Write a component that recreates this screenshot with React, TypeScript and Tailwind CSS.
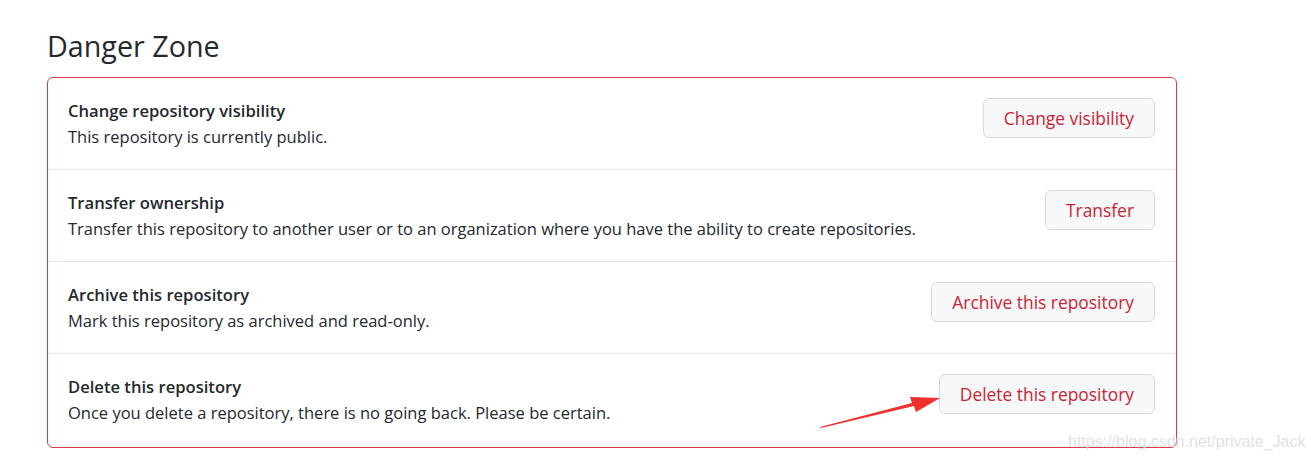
import React from "react";

const rows = [
  {
    title: "Change repository visibility",
    desc: "This repository is currently public.",
    btn: "Change visibility",
    h: "h-[91px]",
  },
  {
    title: "Transfer ownership",
    desc: "Transfer this repository to another user or to an organization where you have the ability to create repositories.",
    btn: "Transfer",
    h: "h-[92px]",
  },
  {
    title: "Archive this repository",
    desc: "Mark this repository as archived and read-only.",
    btn: "Archive this repository",
    h: "h-[92px]",
  },
  {
    title: "Delete this repository",
    desc: "Once you delete a repository, there is no going back. Please be certain.",
    btn: "Delete this repository",
    h: "h-[94px]",
  },
];

export default function App() {
  return (
    <div
      className="relative w-[1311px] h-[459px] bg-white overflow-hidden text-[#24292e]"
      style={{ fontFamily: '"Open Sans", "Noto Sans", sans-serif' }}
    >
      <div className="pl-[47px] pt-[26px] w-[1177px]">
        <h2 className="text-[28.7px] leading-[40px] font-normal">Danger Zone</h2>
        <div className="mt-[11px] border border-[#d73a49] rounded-[6px]">
          {rows.map((r, i) => (
            <div
              key={i}
              className={`flex items-start justify-between pl-[20px] pr-[21px] ${
                i > 0 ? "border-t border-[#e8e8e8]" : ""
              } ${r.h}`}
            >
              <div className="flex flex-col pt-[20px]">
                <div className="text-[16.6px] leading-[26px] font-semibold">{r.title}</div>
                <div className="text-[16.5px] leading-[26px]">{r.desc}</div>
              </div>
              <button className="mt-[20px] h-[40px] px-[20px] rounded-[6px] border border-[#d5d8da] bg-[#f6f8fa] text-[#cb2431] text-[17.4px] font-medium">
                {r.btn}
              </button>
            </div>
          ))}
        </div>
      </div>
      <svg className="absolute left-0 top-0" width="1311" height="459">
        <polygon points="820,427 912,403 910,397 940,398 916,412 914,406 821,428" fill="#f0312b" />
      </svg>
      <div className="absolute left-[1068px] top-[430px] text-[16px] text-[#e2e2e2]" style={{ fontFamily: '"Liberation Sans", sans-serif' }}>
        https://blog.csdn.net/private_Jack
      </div>
    </div>
  );
}
